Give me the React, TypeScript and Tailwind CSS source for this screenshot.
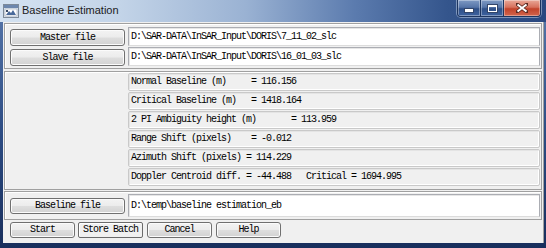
import React from "react";

const mono = "font-['Liberation_Mono','Courier_New',monospace] text-[10px] tracking-[-1px] leading-none text-black whitespace-pre";

function WinButton({ label, className = "" }: { label: string; className?: string }) {
  return (
    <div
      className={
        "flex items-center justify-center rounded-[3px] border border-[#707070] shadow-[inset_0_0_0_1px_#fbfbfb] bg-[linear-gradient(to_bottom,#f3f3f3_0%,#ececec_48%,#dedede_52%,#d2d2d2_100%)] " +
        className
      }
    >
      <span className={mono}>{label}</span>
    </div>
  );
}

function PathField({ value, className = "" }: { value: string; className?: string }) {
  return (
    <div
      className={
        "flex-1 flex items-center pl-[2px] bg-white border border-[#abadb3] border-b-[#dcdcdc] shadow-[inset_1px_1px_0_#e6e6e6] " +
        className
      }
    >
      <span className={mono}>{value}</span>
    </div>
  );
}

const results = [
  "Normal Baseline (m)     = 116.156",
  "Critical Baseline (m)   = 1418.164",
  "2 PI Ambiguity height (m)       = 113.959",
  "Range Shift (pixels)    = -0.012",
  "Azimuth Shift (pixels) = 114.229",
  "Doppler Centroid diff. = -44.488   Critical = 1694.995",
];

function TitleIcon() {
  return (
    <svg width="16" height="14" viewBox="0 0 16 14">
      <rect x="0.5" y="0.5" width="15" height="13" fill="#dfe6ee" stroke="#7d8a99" />
      <rect x="1" y="1" width="14" height="3" fill="#6d87ad" />
      <rect x="2" y="5" width="12" height="7" fill="#ffffff" stroke="#9aa6b4" strokeWidth="0.6" />
      <path d="M3 11 L6 7 L8 9 L10 6 L13 11 Z" fill="#4a6a9a" />
      <rect x="3" y="6" width="2" height="2" fill="#3c4c66" />
    </svg>
  );
}

function CaptionButtons() {
  return (
    <div className="self-start mr-[5px] flex h-[17px] rounded-b-[4px] overflow-hidden border border-t-0 border-[#1d3560] shadow-[0_0_0_1px_rgba(200,215,235,0.5)]">
      <div className="w-[23px] flex items-end justify-center pb-[4px] border-r border-[#1d3560] bg-[linear-gradient(to_bottom,#7f9ac4_0%,#5675a8_45%,#2f5088_55%,#3d62a0_100%)] shadow-[inset_0_0_0_1px_rgba(255,255,255,0.35)]">
        <div className="w-[8px] h-[3px] bg-white border border-[#33466a] box-content -mb-[1px]" />
      </div>
      <div className="w-[23px] flex items-center justify-center border-r border-[#1d3560] bg-[linear-gradient(to_bottom,#7f9ac4_0%,#5675a8_45%,#2f5088_55%,#3d62a0_100%)] shadow-[inset_0_0_0_1px_rgba(255,255,255,0.35)]">
        <svg width="11" height="9" viewBox="0 0 11 9">
          <rect x="0.5" y="0.5" width="10" height="8" fill="none" stroke="#33466a" />
          <rect x="1.5" y="1.5" width="8" height="6" fill="none" stroke="#ffffff" />
          <rect x="1.5" y="1.5" width="8" height="1.5" fill="#ffffff" />
        </svg>
      </div>
      <div className="w-[36px] flex items-center justify-center bg-[linear-gradient(to_bottom,#e9a898_0%,#d7715d_45%,#c2432b_55%,#d2654c_100%)] shadow-[inset_0_0_0_1px_rgba(255,255,255,0.35)]">
        <svg width="12" height="10" viewBox="0 0 12 10">
          <path d="M1 1 L11 9 M11 1 L1 9" stroke="#5a2a22" strokeWidth="3.4" strokeLinecap="square" />
          <path d="M1.5 1.5 L10.5 8.5 M10.5 1.5 L1.5 8.5" stroke="#ffffff" strokeWidth="2" />
        </svg>
      </div>
    </div>
  );
}

export default function App() {
  return (
    <div className="w-[546px] h-[248px] flex flex-col overflow-hidden bg-[linear-gradient(to_bottom,#5878ac,#2c4b82_55%,#182e5c)]">
      {/* title bar */}
      <div className="h-[22px] flex items-start bg-[linear-gradient(to_right,#d4e2f1_0%,#c3d4e8_22%,#9ab2d3_45%,#5b7bae_65%,#34558c_82%,#2a4880_100%)]">
        <div className="h-[21px] flex items-center pl-[3px] gap-[3px]">
          <TitleIcon />
          <span className="font-['Liberation_Sans',Arial,sans-serif] text-[11px] text-[#1b1b1b]">
            Baseline Estimation
          </span>
        </div>
        <div className="ml-auto" />
        <CaptionButtons />
      </div>

      {/* client */}
      <div className="flex-1 flex pl-[3px] pr-[2px] pb-[5px]">
        <div className="flex-1 bg-[#f0f0f0] flex flex-col px-[1px] pt-[1px] border-r border-[#a0a0a0]">
          {/* input files */}
          <div className="h-[46px] flex flex-col gap-[1px] pt-[3px] pl-[5px] pr-[1px] border border-[#a0a0a0] shadow-[inset_1px_1px_0_#ffffff]">
            <div className="h-[19px] flex items-end gap-[3px]">
              <WinButton label="Master file" className="w-[115px] h-[17px]" />
              <PathField value={"D:\\SAR-DATA\\InSAR_Input\\DORIS\\7_11_02_slc"} className="self-stretch" />
            </div>
            <div className="h-[19px] flex items-end gap-[3px]">
              <WinButton label="Slave file" className="w-[115px] h-[17px]" />
              <PathField value={"D:\\SAR-DATA\\InSAR_Input\\DORIS\\16_01_03_slc"} className="self-stretch" />
            </div>
          </div>

          {/* results */}
          <div className="mt-[2px] flex pt-[1px] pb-[3px] pr-[1px] border border-[#a0a0a0] shadow-[inset_1px_1px_0_#ffffff]">
            <div className="w-[123px]" />
            <div className="flex-1 flex flex-col gap-[1px]">
              {results.map((r) => (
                <div
                  key={r}
                  className="h-[18px] flex items-center pl-[2px] rounded-[2px] border border-[#c9c9c9] bg-[#f0f0f0] shadow-[inset_-1px_-1px_0_#ffffff,inset_1px_1px_0_#e4e4e4]"
                >
                  <span className={mono}>{r}</span>
                </div>
              ))}
            </div>
          </div>

          {/* baseline file */}
          <div className="mt-[1px] h-[29px] flex items-center gap-[3px] pl-[5px] pr-[1px] border border-[#a0a0a0] shadow-[inset_1px_1px_0_#ffffff]">
            <WinButton label="Baseline file" className="w-[115px] h-[16px]" />
            <PathField value={"D:\\temp\\baseline estimation_eb"} className="h-[23px]" />
          </div>

          {/* actions */}
          <div className="mt-[2px] flex pl-[6px]">
            <WinButton label="Start" className="w-[65px] h-[16px]" />
            <div className="ml-[3px] w-[65px] h-[16px] flex items-center justify-center rounded-[2px] border border-[#6a6a6a] bg-[#f0f0f0] shadow-[inset_1px_1px_0_#ffffff]">
              <span className={mono}>Store Batch</span>
            </div>
            <WinButton label="Cancel" className="ml-[4px] w-[65px] h-[16px]" />
            <WinButton label="Help" className="ml-[4px] w-[65px] h-[16px]" />
          </div>
        </div>
      </div>
    </div>
  );
}
